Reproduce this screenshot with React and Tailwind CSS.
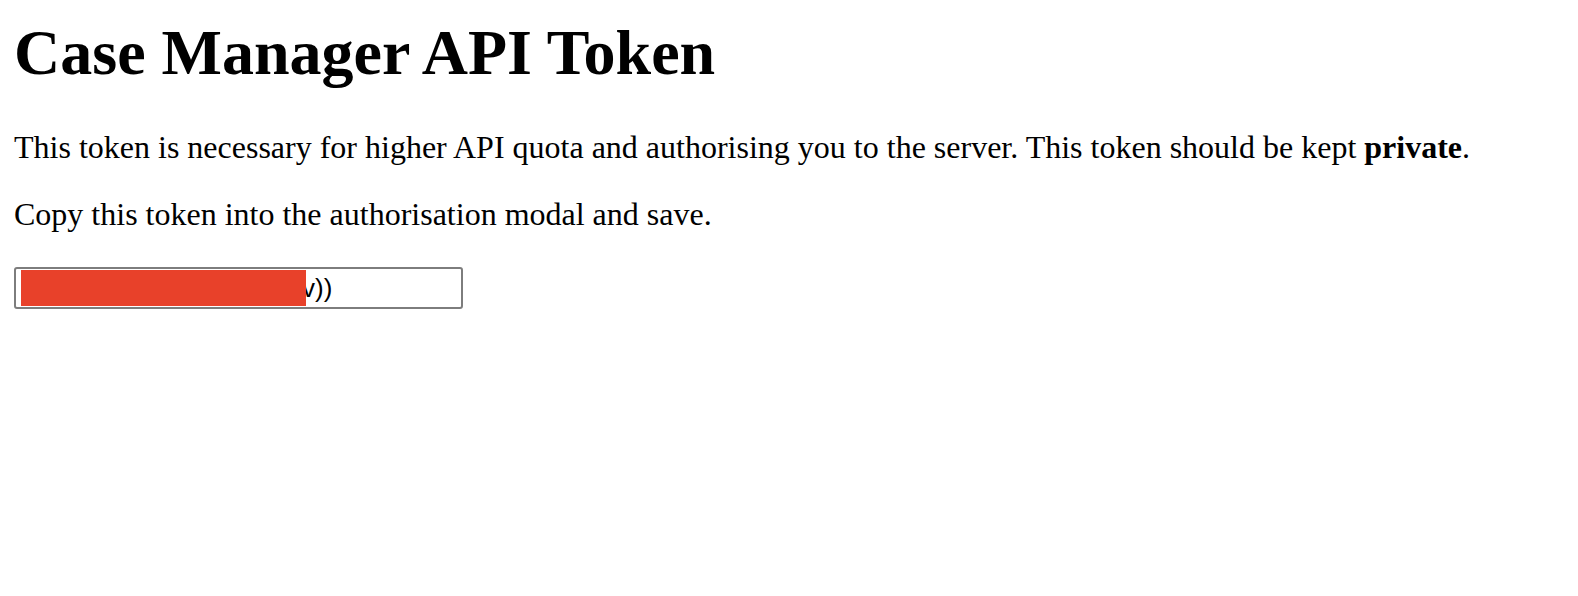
import React from 'react';

const App = () => {
  return (
    <div className="min-h-[596px] bg-white px-[14px] text-black font-['Liberation_Serif','Times_New_Roman',serif]">
      <h1 className="mt-[17px] text-[64px] leading-[72px] font-bold">Case Manager API Token</h1>

      <p className="mt-[40px] text-[32px] leading-[37px]">
        This token is necessary for higher API quota and authorising you to the server. This token should be kept{' '}
        <b className="font-bold">private</b>.
      </p>

      <p className="mt-[30px] text-[32px] leading-[37px]">Copy this token into the authorisation modal and save.</p>

      {/* token field, value redacted */}
      <div className="relative mt-[34px] flex h-[42px] w-[449px] items-center rounded-[3px] border-2 border-[#7d7d7d] pl-[286px] font-['Liberation_Sans',Arial,sans-serif] text-[26px] leading-none">
        <span>v))</span>
        <div className="absolute left-[5px] top-[1px] h-[36px] w-[285px] bg-[#e8412a]" />
      </div>
    </div>
  );
};

export default App;
